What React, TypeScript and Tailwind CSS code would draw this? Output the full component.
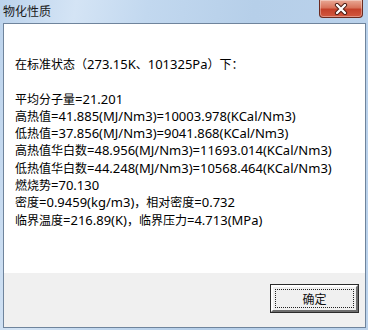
import React from "react";

const CJK = /[\u3000-\u9fff\uff00-\uffef]/;

function Mixed({ text }: { text: string }) {
  const parts = text.match(/[\u3000-\u9fff\uff00-\uffef]+|[^\u3000-\u9fff\uff00-\uffef]+/g) || [];
  return (
    <>
      {parts.map((p, i) =>
        CJK.test(p) ? (
          <span key={i} className="font-['Noto_Sans_CJK_SC',sans-serif] text-[12px]">
            {p}
          </span>
        ) : (
          <span key={i} className="font-['Noto_Sans','Noto_Sans_CJK_SC',sans-serif] text-[13px]">
            {p}
          </span>
        )
      )}
    </>
  );
}

const lines = [
  "平均分子量=21.201",
  "高热值=41.885(MJ/Nm3)=10003.978(KCal/Nm3)",
  "低热值=37.856(MJ/Nm3)=9041.868(KCal/Nm3)",
  "高热值华白数=48.956(MJ/Nm3)=11693.014(KCal/Nm3)",
  "低热值华白数=44.248(MJ/Nm3)=10568.464(KCal/Nm3)",
  "燃烧势=70.130",
  "密度=0.9459(kg/m3)，相对密度=0.732",
  "临界温度=216.89(K)，临界压力=4.713(MPa)",
];

export default function App() {
  return (
    <div className="w-[368px] h-[330px] overflow-hidden flex flex-col bg-[linear-gradient(100deg,#bcd3ec_0%,#d4e4f5_18%,#c2d8ef_35%,#b6cfe9_60%,#bcd3ec_100%)]">
      {/* Title bar */}
      <div className="h-[23px] flex items-start shrink-0">
        <div className="pl-[3px] pt-[2px] text-[12px] leading-[18px] text-[#1a1a1a] font-['Noto_Sans_CJK_SC',sans-serif]">
          物化性质
        </div>
        <div className="ml-auto mr-[5px] w-[44px] h-[18px] rounded-b-[4px] border border-t-0 border-[#6b2a1f] bg-[linear-gradient(180deg,#e9a996_0%,#d8735b_45%,#c4412a_55%,#d2583f_100%)] flex items-center justify-center shadow-[inset_0_0_0_1px_rgba(255,255,255,0.35)]">
          <svg width="14" height="12" viewBox="0 0 14 12">
            <path d="M3 2 L11 10 M11 2 L3 10" stroke="#4a1a12" strokeWidth="4.2" strokeLinecap="round" />
            <path d="M3 2 L11 10 M11 2 L3 10" stroke="#ffffff" strokeWidth="2.4" strokeLinecap="round" />
          </svg>
        </div>
      </div>

      {/* Client area */}
      <div className="ml-[3px] w-[363px] h-[305px] border border-[#6f849c] flex flex-col shrink-0">
        <div className="flex-1 bg-white pl-[11px] pt-[31px] text-[#000] leading-[17.3px]">
          <div className="h-[17.3px] whitespace-nowrap">
            <Mixed text="在标准状态（273.15K、101325Pa）下：" />
          </div>
          <div className="h-[17.3px]" />
          {lines.map((l, i) => (
            <div key={i} className="h-[17.3px] whitespace-nowrap">
              <Mixed text={l} />
            </div>
          ))}
        </div>
        <div className="h-[54px] bg-[#f0f0f0] flex justify-end items-start pt-[11px] pr-[6px] shrink-0">
          <div className="w-[89px] h-[29px] border border-[#2b2b2b] bg-[#f0f0f0] p-0">
            <div className="w-full h-full border-[2px] border-t-[#ffffff] border-l-[#ffffff] border-r-[#6e6e6e] border-b-[#6e6e6e] p-[2px]">
              <div className="w-full h-full border border-dotted border-[#222] flex items-center justify-center text-[12px] text-[#111] font-['Noto_Sans_CJK_SC',sans-serif]">
                确定
              </div>
            </div>
          </div>
        </div>
      </div>
    </div>
  );
}
